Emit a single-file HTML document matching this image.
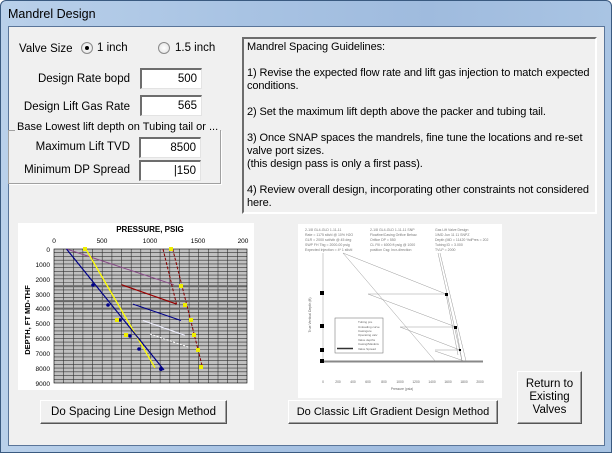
<!DOCTYPE html>
<html><head><style>
*{margin:0;padding:0;box-sizing:border-box}
body{width:612px;height:453px;overflow:hidden;font-family:"Liberation Sans",sans-serif;font-size:11.5px;color:#000;background:#fff}
.win{position:absolute;left:0;top:0;width:612px;height:453px;border:1px solid #3a5a80;border-radius:6px 6px 0 0;background:linear-gradient(90deg,#b9d0ea,#a8c3e3 40%,#9fbbde 70%,#a9c4e3);}
.title{position:absolute;left:7px;top:6px;font-size:12.5px;color:#000}
.client{position:absolute;left:7px;top:25px;width:597px;height:420px;background:#f0f0f0;border:1px solid #5a7599}
.a{position:absolute;white-space:nowrap}
.r{position:absolute;white-space:nowrap;text-align:right;width:130px;left:0}
.inp{position:absolute;background:#fff;border-top:2px solid #6d6d6d;border-left:2px solid #6d6d6d;border-right:1px solid #e3e3e3;border-bottom:1px solid #e3e3e3;text-align:right;padding-right:4px;font-size:11.5px;line-height:18px;height:21px}
.radio{position:absolute;width:12px;height:12px;border-radius:50%;border:1px solid #8a8a8a;background:radial-gradient(#fff,#e0e0e0)}
.btn{position:absolute;background:#f0f0f0;border-top:1px solid #fff;border-left:1px solid #fff;border-right:1px solid #555;border-bottom:1px solid #555;box-shadow:inset -1px -1px 0 #a0a0a0;text-align:center;font-size:11.5px;white-space:nowrap}
</style></head><body>
<div class="win">
<div class="title">Mandrel Design</div>
<div class="client"></div>
</div>
<div class="a" style="left:19px;top:43px">Valve Size</div>
<div class="radio" style="left:81px;top:42px"><div style="position:absolute;left:3px;top:3px;width:4px;height:4px;border-radius:50%;background:#000"></div></div>
<div class="a" style="left:97px;top:42px">1 inch</div>
<div class="radio" style="left:158px;top:42px"></div>
<div class="a" style="left:175px;top:42px">1.5 inch</div>
<div class="r" style="top:73px">Design Rate bopd</div>
<div class="inp" style="left:140px;top:68px;width:62px">500</div>
<div class="r" style="top:101px">Design Lift Gas Rate</div>
<div class="inp" style="left:140px;top:95px;width:62px">565</div>
<div style="position:absolute;left:8px;top:130px;width:213px;height:54px;border:1px solid #a0a0a0;box-shadow:1px 1px 0 #fff"></div>
<div class="a" style="left:15px;top:121px;background:#f0f0f0;padding:0 2px;font-size:11px">Base Lowest lift depth on Tubing tail or ...</div>
<div class="r" style="top:141px">Maximum Lift TVD</div>
<div class="inp" style="left:139px;top:137px;width:62px">8500</div>
<div class="r" style="top:164px">Minimum DP Spread</div>
<div class="inp" style="left:139px;top:160px;width:62px">|150</div>
<div style="position:absolute;left:242px;top:37px;width:355px;height:177px;border-top:2px solid #6d6d6d;border-left:2px solid #6d6d6d;border-right:2px solid #fff;border-bottom:2px solid #fff;padding:2px 3px;font-size:11px;line-height:13px;letter-spacing:-0.1px;background:#f0f0f0">Mandrel Spacing Guidelines:<br><br>1) Revise the expected flow rate and lift gas injection to match expected conditions.<br><br>2) Set the maximum lift depth above the packer and tubing tail.<br><br>3) Once SNAP spaces the mandrels, fine tune the locations and re-set valve port sizes.<br>(this design pass is only a first pass).<br><br>4) Review overall design, incorporating other constraints not considered here.</div>

<svg style="position:absolute;left:10px;top:215px" width="250" height="175" font-family="Liberation Sans" >
<rect x="8" y="8" width="236" height="167" fill="#fff"/>
<rect x="44" y="34" width="193" height="134" fill="#c0c0c0"/>
<g stroke="#333" stroke-width="0.6">
<path d="M53.6 34V168M63.3 34V168M72.9 34V168M82.6 34V168M92.2 34V168M101.9 34V168M111.5 34V168M121.2 34V168M130.8 34V168M140.5 34V168M150.1 34V168M159.8 34V168M169.4 34V168M179.1 34V168M188.7 34V168M198.4 34V168M208 34V168M217.7 34V168M227.3 34V168"/>
<path d="M44 37.7H237M44 41.4H237M44 45.2H237M44 48.9H237M44 52.6H237M44 56.3H237M44 60.1H237M44 63.8H237M44 67.5H237M44 71.2H237M44 74.9H237M44 78.7H237M44 82.4H237M44 86.1H237M44 89.8H237M44 93.6H237M44 97.3H237M44 101H237M44 104.7H237M44 108.4H237M44 112.2H237M44 115.9H237M44 119.6H237M44 123.3H237M44 127.1H237M44 130.8H237M44 134.5H237M44 138.2H237M44 141.9H237M44 145.7H237M44 149.4H237M44 153.1H237M44 156.8H237M44 160.6H237M44 164.3H237"/>
</g>
<path d="M44 71.2H237M44 86.1H237M44 93.6H237" stroke="#666" stroke-width="2"/>
<rect x="44" y="34" width="193" height="134" fill="none" stroke="#000" stroke-width="0.6"/>
<path d="M56.5 34L163.7 69.7" stroke="#8a4a8a" stroke-width="1"/>
<path d="M75.8 34L145 152.8" stroke="#ff0" stroke-width="1.3"/>
<path d="M56.5 34L154 155" stroke="#008" stroke-width="1.2"/>
<path d="M153 34L166.5 89.1M162.7 34L192.6 152.8" stroke="#800" stroke-width="1" stroke-dasharray="3,1.5"/>
<path d="M111.5 69.7L166.5 89.1" stroke="#900" stroke-width="1.2"/>
<path d="M123 89.1L171 105.5" stroke="#008" stroke-width="1"/>
<path d="M133 105.5L175 120.4" stroke="#eef" stroke-width="1"/>
<path d="M140 119L179 132.3" stroke="#fff" stroke-width="1" stroke-dasharray="2,1.5"/>
<g fill="#008"><circle cx="83" cy="70" r="1.8"/><circle cx="98" cy="90" r="1.8"/><circle cx="110" cy="105" r="1.8"/><circle cx="120" cy="121" r="1.8"/><circle cx="129" cy="134" r="1.8"/><circle cx="151" cy="154" r="2"/></g>
<g fill="#ee0"><rect x="73" y="32" width="4" height="4"/><rect x="105" y="103" width="4" height="4"/><rect x="114" y="118" width="4" height="4"/><rect x="186" y="133" width="4" height="4"/><rect x="189" y="150" width="4" height="4"/><rect x="182" y="118" width="4" height="4"/><rect x="179" y="103" width="4" height="4"/><rect x="173" y="88" width="4" height="4"/><rect x="169" y="69" width="4" height="4"/><rect x="159" y="32" width="4" height="4"/></g>
<text x="140" y="17" font-size="8" font-weight="bold" text-anchor="middle">PRESSURE, PSIG</text>
<g font-size="6.5" text-anchor="middle"><text x="44" y="28">0</text><text x="92" y="28">500</text><text x="140" y="28">1000</text><text x="188" y="28">1500</text><text x="233" y="28">200</text></g>
<g font-size="6.5" text-anchor="end"><text x="40" y="37">0</text><text x="40" y="52">1000</text><text x="40" y="67">2000</text><text x="40" y="82">3000</text><text x="40" y="96">4000</text><text x="40" y="111">5000</text><text x="40" y="126">6000</text><text x="40" y="141">7000</text><text x="40" y="156">8000</text><text x="40" y="171">9000</text></g>
<text transform="translate(20,105) rotate(-90)" font-size="7.5" font-weight="bold" text-anchor="middle">DEPTH, FT MD-THF</text>
</svg>

<svg style="position:absolute;left:290px;top:215px" width="215" height="185" font-family="Liberation Sans">
<rect x="8" y="9" width="204" height="174" fill="#fff"/>
<g font-size="3.5" fill="#777"><text x="15" y="16">2-1/8 GL4-GLD 1-11-11</text><text x="15" y="21">Rate = 1175 stb/d @ 10% H2O</text><text x="15" y="26">GLR = 2000 scf/stb @ 45 deg</text><text x="15" y="31">SWP FH Tbg = 2000-00 psig</text><text x="15" y="36">Expected Injection = 4* 1 stb/d</text>
<text x="80" y="16">2-1/8 GL4-GLD 1-11-11 SNP</text><text x="80" y="21">Flowline/Casing Orifice Behav.</text><text x="80" y="26">Orifice DP = 550</text><text x="80" y="31">CL Fill = 6000 ft psig @ 1000</text><text x="80" y="36">position Csg: Incr-direction</text>
<text x="145" y="16">Gas Lift Valve Design</text><text x="145" y="21">1/MD Jun 11 11 SNPZ</text><text x="145" y="26">Depth (MD = 11420  %dPres = 202</text><text x="145" y="31">Tubing ID = 3.000</text><text x="145" y="36">TVLP = 2000</text></g>
<g stroke="#999" stroke-width="0.5" fill="none">
<path d="M33 38V147H193"/>
<path d="M53 38L146 147M53 38L156 79M78 79L156 79M78 79L166 112M110 112L166 112M110 112L170 135M145 135L170 135M145 136L174 146M148 38L172 146M150 38L176 146"/>
<path d="M156 79L168 140M166 112L172 146"/>
</g>
<path d="M33 146.5H193" stroke="#888" stroke-width="2"/>
<g fill="#000"><rect x="30" y="76" width="4" height="4"/><rect x="30" y="109" width="4" height="4"/><rect x="30" y="133" width="4" height="4"/><rect x="30" y="144" width="4" height="4"/><rect x="155" y="78" width="3" height="3"/><rect x="164" y="111" width="3" height="3"/><rect x="169" y="134" width="2" height="2"/></g>
<rect x="45" y="103" width="48" height="35" fill="#fff" stroke="#666" stroke-width="0.5"/>
<g font-size="3" fill="#666"><text x="68" y="108">Tubing pre</text><text x="68" y="113">Unloading curve</text><text x="68" y="117">Casingure</text><text x="68" y="121">Operating valv</text><text x="68" y="126">Valve depths</text><text x="68" y="130">Casing/MaxEnv</text><text x="68" y="135">Valve Spread</text></g>
<path d="M47 133.5H63" stroke="#333" stroke-width="1.5"/>
<g font-size="3.3" fill="#666" text-anchor="middle"><text x="33" y="168">0</text><text x="48" y="168">200</text><text x="63" y="168">400</text><text x="78" y="168">600</text><text x="94" y="168">800</text><text x="110" y="168">1000</text><text x="126" y="168">1200</text><text x="142" y="168">1400</text><text x="158" y="168">1600</text><text x="174" y="168">1800</text><text x="190" y="168">2000</text><text x="112" y="175">Pressure (psia)</text></g>
<text transform="translate(21,100) rotate(-90)" font-size="3.5" fill="#666" text-anchor="middle">True Vertical Depth (ft)</text>
</svg>

<div class="btn" style="left:40px;top:400px;width:187px;height:24px;line-height:22px">Do Spacing Line Design Method</div>
<div class="btn" style="left:288px;top:400px;width:210px;height:24px;line-height:22px;font-size:11px">Do Classic Lift Gradient Design Method</div>
<div class="btn" style="left:517px;top:371px;width:65px;height:53px;padding-top:6px;line-height:13px">Return to<br>Existing<br>Valves</div>
</body></html>
